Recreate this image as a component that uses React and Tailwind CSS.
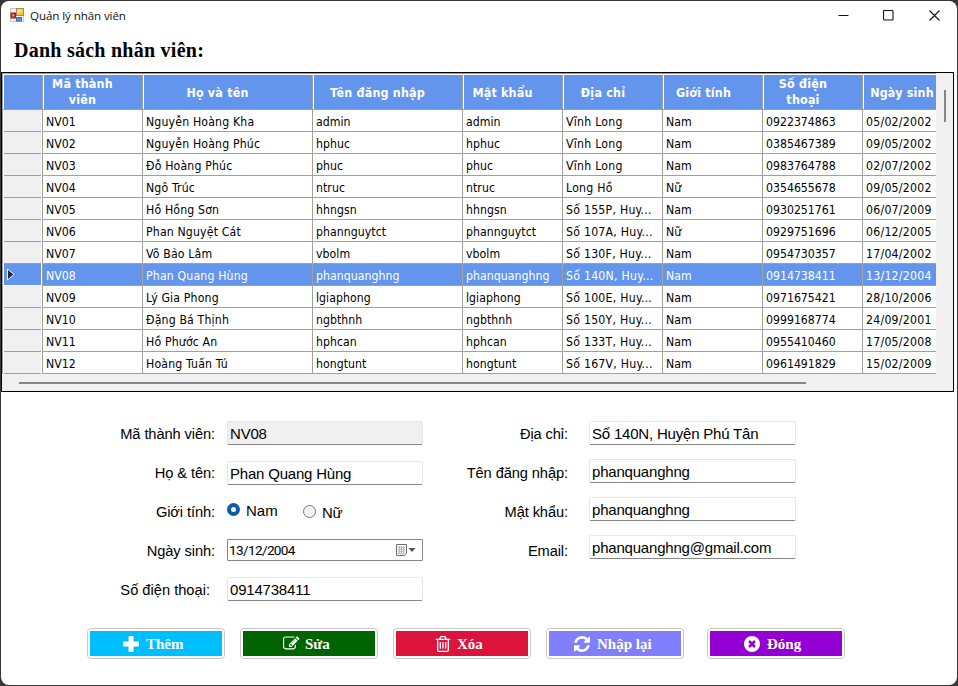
import React from "react";

const COLS = "grid grid-cols-[100px_170px_150px_100px_100px_100px_100px_74px]";

const headers = [
  ["Mã thành viên", "pr-[21px]"],
  ["Họ và tên", "pr-[21px] pt-px"],
  ["Tên đăng nhập", "pr-[21px] pt-px"],
  ["Mật khẩu", "pr-[21px] pt-px"],
  ["Địa chỉ", "pr-[20px] pt-px"],
  ["Giới tính", "pr-[19px] pt-px"],
  ["Số điện thoại", "pr-[20px]"],
  ["Ngày sinh", "pl-[3px] pt-px"],
];

const rows = [
  ["NV01", "Nguyễn Hoàng Kha", "admin", "admin", "Vĩnh Long", "Nam", "0922374863", "05/02/2002"],
  ["NV02", "Nguyễn Hoàng Phúc", "hphuc", "hphuc", "Vĩnh Long", "Nam", "0385467389", "09/05/2002"],
  ["NV03", "Đỗ Hoàng Phúc", "phuc", "phuc", "Vĩnh Long", "Nam", "0983764788", "02/07/2002"],
  ["NV04", "Ngô Trúc", "ntruc", "ntruc", "Long Hồ", "Nữ", "0354655678", "09/05/2002"],
  ["NV05", "Hồ Hồng Sơn", "hhngsn", "hhngsn", "Số 155P, Huy...", "Nam", "0930251761", "06/07/2009"],
  ["NV06", "Phan Nguyệt Cát", "phannguytct", "phannguytct", "Số 107A, Huy...", "Nữ", "0929751696", "06/12/2005"],
  ["NV07", "Võ Bảo Lâm", "vbolm", "vbolm", "Số 130F, Huy...", "Nam", "0954730357", "17/04/2002"],
  ["NV08", "Phan Quang Hùng", "phanquanghng", "phanquanghng", "Số 140N, Huy...", "Nam", "0914738411", "13/12/2004"],
  ["NV09", "Lý Gia Phong", "lgiaphong", "lgiaphong", "Số 100E, Huy...", "Nam", "0971675421", "28/10/2006"],
  ["NV10", "Đặng Bá Thịnh", "ngbthnh", "ngbthnh", "Số 150Y, Huy...", "Nam", "0999168774", "24/09/2001"],
  ["NV11", "Hồ Phước An", "hphcan", "hphcan", "Số 133T, Huy...", "Nam", "0955410460", "17/05/2008"],
  ["NV12", "Hoàng Tuấn Tú", "hongtunt", "hongtunt", "Số 167V, Huy...", "Nam", "0961491829", "15/02/2009"],
];

// Horizontal tuning per grid column so the text fills the cell as Tahoma does.
const cellTracking = ["tracking-normal", "tracking-[0.16px]", "tracking-[0.05px]", "tracking-[0.05px]", "tracking-[0.25px]", "tracking-normal", "tracking-normal", "tracking-[0.25px]"];

function AppIcon() {
  return (
    <svg width="15" height="15" viewBox="0 0 15 15">
      <rect x="0.5" y="0.5" width="13" height="13" fill="#f4f4f4" stroke="#c9c9c9" />
      <rect x="6.5" y="0.5" width="7" height="7" fill="#f3c63f" stroke="#a8894a" />
      <rect x="7.5" y="1.5" width="4" height="3" fill="#fbe08a" />
      <rect x="1" y="5" width="4.5" height="5" fill="#b83a2e" stroke="#8a2b22" />
      <rect x="2.2" y="6.3" width="2" height="2" fill="#e58a78" />
      <rect x="6.5" y="9.5" width="5" height="3.5" fill="#5f93dc" stroke="#3b68b0" />
    </svg>
  );
}

function TitleBar() {
  return (
    <div className="flex h-[29px] items-center pl-[9px] pr-[17px]">
      <AppIcon />
      <span className="ml-[5px] font-['Open_Sans','Noto_Sans',sans-serif] text-[11.6px] tracking-[-0.1px] text-[#111]">
        Quản lý nhân viên
      </span>
      <div className="ml-auto flex items-center text-[#111]">
        <svg width="11" height="11" viewBox="0 0 11 11" className="mr-[34px]">
          <path d="M0.5 5.5H10.5" stroke="currentColor" />
        </svg>
        <svg width="11" height="11" viewBox="0 0 11 11" className="mr-[35px]">
          <rect x="0.5" y="0.5" width="9.5" height="9.5" rx="1" fill="none" stroke="currentColor" strokeWidth="1.1" />
        </svg>
        <svg width="11" height="11" viewBox="0 0 11 11">
          <path d="M0.5 0.5L10.5 10.5M10.5 0.5L0.5 10.5" stroke="currentColor" strokeWidth="1.1" />
        </svg>
      </div>
    </div>
  );
}

function Grid() {
  return (
    <div className="flex h-[320px] w-[953px] flex-col border border-black bg-[#f0f0f0] font-['DejaVu_Sans_Condensed','DejaVu_Sans','Noto_Sans',sans-serif] text-[12.2px]">
      <div className="flex h-[301px]">
        <div className="w-[934px] shrink-0 overflow-hidden border-l border-[#a0a0a0] bg-white">
          <div className="flex h-[37px] border-t border-b border-[#a0a0a0] bg-[#6495ed]">
            <div className="flex h-[35px] border-t border-l border-white">
              <div className="w-[39px] shrink-0 border-r border-[#a0a0a0]" />
              <div className={COLS + " text-[12.4px] font-bold leading-[16px] tracking-[0.2px] text-white"}>
                {headers.map(([label, pad]) => (
                  <div key={label} className={"flex items-center justify-center border-l border-r border-l-white border-r-[#a0a0a0] text-center last:border-r-0 " + pad}>
                    <span className={label.length === 13 && label !== "Tên đăng nhập" ? "w-[68px]" : "whitespace-nowrap"}>{label}</span>
                  </div>
                ))}
              </div>
            </div>
          </div>
          {rows.map((row) => {
            const selected = row[0] === "NV08";
            return (
              <div key={row[0]} className={"flex h-[22px] " + (selected ? "text-white" : "text-black")}>
                <div className="flex w-[40px] shrink-0 border-r border-[#a0a0a0] pl-px">
                  <div className={"flex h-[22px] w-[37px] items-center border-b " + (selected ? "border-white bg-[#6495ed]" : "border-[#a0a0a0] bg-[#f0f0f0]")}>
                    {selected && (
                      <svg width="9" height="13" viewBox="0 0 9 13" className="ml-[2px]">
                        <path d="M1.5 1V12L8 6.5Z" fill="#2b2b3b" stroke="#eef3ff" strokeWidth="1" />
                      </svg>
                    )}
                  </div>
                </div>
                <div className={COLS + (selected ? " bg-[#6495ed]" : "")}>
                  {row.map((cell, i) => (
                    <div key={i} className={"overflow-hidden border-r border-b border-[#a0a0a0] pl-[3px] leading-[24px] whitespace-nowrap last:border-r-0 " + cellTracking[i]}>
                      {cell}
                    </div>
                  ))}
                </div>
              </div>
            );
          })}
        </div>
        <div className="flex grow justify-center pt-[17px]">
          <div className="h-[32px] w-[2px] bg-[#868686]" />
        </div>
      </div>
      <div className="mt-[8px] ml-[17px] h-[2px] w-[787px] bg-[#868686]" />
    </div>
  );
}

function Label({ children, className = "tracking-[-0.1px]" }) {
  return <div className={"flex h-[39px] items-center justify-end text-[14.67px] whitespace-nowrap " + className}>{children}</div>;
}

function Field({ value, className = "" }) {
  return (
    <div className={"flex h-[24px] items-center rounded-[2px] border border-[#e6e6e6] border-b-[#868686] pl-[2px] pt-[3px] text-[15px] tracking-[-0.2px] whitespace-nowrap " + className}>
      {value}
    </div>
  );
}

function DateField() {
  return (
    <div className="mt-[18px] flex h-[22px] items-center rounded-[1px] border border-[#868686] pl-[1px] text-[14px]">
      <span className="font-['Roboto','Liberation_Sans',sans-serif] text-[13.6px] tracking-[-0.65px]">13/12/2004</span>
      <svg width="24" height="14" viewBox="0 0 24 14" className="mr-[3px] ml-auto">
        <path d="M1.5 1.5H11.5V10L9.5 12.5H1.5Z" fill="#f5f5f5" stroke="#6d6d6d" />
        <path d="M3 4.5H10M3 6.5H10M3 8.5H10M3 10.5H9M4.5 3V11M6.5 3V11M8.5 3V11" stroke="#b5b5b5" strokeWidth="0.8" />
        <path d="M13.5 5H20.5L17 9Z" fill="#44546f" />
      </svg>
    </div>
  );
}

function FormArea() {
  return (
    <div className="flex h-[236px] pt-[22px] font-['Liberation_Sans',Arial,sans-serif] text-black">
      <div className="ml-[100px] w-[114px]">
        <Label>Mã thành viên:</Label>
        <Label>Họ &amp; tên:</Label>
        <Label>Giới tính:</Label>
        <Label>Ngày sinh:</Label>
        <Label className="pr-[5px] tracking-normal">Số điện thoại:</Label>
      </div>
      <div className="ml-[12px] w-[196px] pt-[7px]">
        <Field value="NV08" className="bg-[#f0f0f0]" />
        <Field value="Phan Quang Hùng" className="mt-[16px]" />
        <div className="mt-[16px] flex h-[20px] text-[15px]">
          <div className="mt-[2px] h-[13px] w-[13px] rounded-full border-4 border-[#0a5ca8] bg-white" />
          <span className="ml-[6px] w-[57px] leading-[20px]">Nam</span>
          <div className="mt-[4px] h-[13px] w-[13px] rounded-full border border-[#777] bg-[#f3f3f3]" />
          <span className="ml-[6px] pt-[2px] leading-[20px] tracking-[-0.4px]">Nữ</span>
        </div>
        <DateField />
        <Field value="0914738411" className="mt-[16px]" />
      </div>
      <div className="ml-[40px] w-[105px]">
        <Label>Địa chỉ:</Label>
        <Label>Tên đăng nhập:</Label>
        <Label>Mật khẩu:</Label>
        <Label>Email:</Label>
      </div>
      <div className="ml-[21px] flex w-[207px] flex-col gap-[14px] pt-[7px]">
        <Field value="Số 140N, Huyện Phú Tân" />
        <Field value="phanquanghng" />
        <Field value="phanquanghng" />
        <Field value="phanquanghng@gmail.com" />
      </div>
    </div>
  );
}

function PlusIcon() {
  return (
    <svg width="16" height="16" viewBox="0 0 16 16" fill="currentColor">
      <path d="M5.5 1Q5.5 0 6.5 0H9.5Q10.5 0 10.5 1V5.5H15Q16 5.5 16 6.5V9.5Q16 10.5 15 10.5H10.5V15Q10.5 16 9.5 16H6.5Q5.5 16 5.5 15V10.5H1Q0 10.5 0 9.5V6.5Q0 5.5 1 5.5H5.5Z" />
    </svg>
  );
}

function EditIcon() {
  return (
    <svg width="17" height="17" viewBox="0 0 1850 1792" fill="currentColor">
      <path d="M888 1184l116-116-152-152-116 116v56h96v96h56zm440-720q-16-16-33 1l-350 350q-17 17-1 33t33-1l350-350q17-17 1-33zm80 594v190q0 119-84.5 203.5t-203.5 84.5h-832q-119 0-203.5-84.5t-84.5-203.5v-832q0-119 84.5-203.5t203.5-84.5h832q63 0 117 25 15 7 18 23 3 17-9 29l-49 49q-14 14-32 8-23-6-45-6h-832q-66 0-113 47t-47 113v832q0 66 47 113t113 47h832q66 0 113-47t47-113v-126q0-13 9-22l64-64q15-15 35-7t20 29zm-96-738l288 288-672 672h-288v-288zm444 132l-92 92-288-288 92-92q28-28 68-28t68 28l152 152q28 28 28 68t-28 68z" />
    </svg>
  );
}

function TrashIcon() {
  return (
    <svg width="16" height="16" viewBox="128 128 1536 1536" fill="currentColor">
      <path d="M704 736v576q0 14-9 23t-23 9h-64q-14 0-23-9t-9-23v-576q0-14 9-23t23-9h64q14 0 23 9t9 23zm256 0v576q0 14-9 23t-23 9h-64q-14 0-23-9t-9-23v-576q0-14 9-23t23-9h64q14 0 23 9t9 23zm256 0v576q0 14-9 23t-23 9h-64q-14 0-23-9t-9-23v-576q0-14 9-23t23-9h64q14 0 23 9t9 23zm128 724v-948h-896v948q0 22 7 40.5t14.5 27 10.5 8.5h832q3 0 10.5-8.5t14.5-27 7-40.5zm-672-1076h448l-48-117q-7-9-17-11h-317q-10 2-17 11zm928 32v64q0 14-9 23t-23 9h-96v948q0 83-47 143.5t-113 60.5h-832q-66 0-113-58.5t-47-141.5v-952h-96q-14 0-23-9t-9-23v-64q0-14 9-23t23-9h309l70-167q15-37 54-63t79-26h320q40 0 79 26t54 63l70 167h309q14 0 23 9t9 23z" />
    </svg>
  );
}

function RefreshIcon() {
  return (
    <svg width="16" height="16" viewBox="0 0 1536 1536" fill="currentColor">
      <path d="M1511 928q0 5-1 7-64 268-268 434.5t-478 166.5q-146 0-282.5-55t-243.5-157l-129 129q-19 19-45 19t-45-19-19-45v-448q0-26 19-45t45-19h448q26 0 45 19t19 45-19 45l-137 137q71 66 161 102t187 36q134 0 250-65t186-179q11-17 53-117 8-23 30-23h192q13 0 22.5 9.5t9.5 22.5zm25-800v448q0 26-19 45t-45 19h-448q-26 0-45-19t-19-45 19-45l138-138q-148-137-349-137-134 0-250 65t-186 179q-11 17-53 117-8 23-30 23h-199q-13 0-22.5-9.5t-9.5-22.5v-7q65-268 270-434.5t480-166.5q146 0 284 55.5t245 156.5l130-129q19-19 45-19t45 19 19 45z" />
    </svg>
  );
}

function CloseIcon() {
  return (
    <svg width="16" height="16" viewBox="0 0 16 16">
      <circle cx="8" cy="8" r="8" fill="currentColor" />
      <path d="M5 5L11 11M11 5L5 11" stroke="#9400d3" strokeWidth="2.6" />
    </svg>
  );
}

const buttons = [
  { label: "Thêm", Icon: PlusIcon, box: "", fill: "bg-[#00bfff] pl-[33px] gap-[7px]" },
  { label: "Sửa", Icon: EditIcon, box: "ml-[15px]", fill: "bg-[#006400] pl-[40px] gap-[5px]" },
  { label: "Xóa", Icon: TrashIcon, box: "ml-[15px]", fill: "bg-[#dc143c] pl-[39px] gap-[6px]" },
  { label: "Nhập lại", Icon: RefreshIcon, box: "ml-[15px]", fill: "bg-[#8080ff] pl-[25px] gap-[7px]" },
  { label: "Đóng", Icon: CloseIcon, box: "ml-[23px]", fill: "bg-[#9400d3] pl-[34px] gap-[7px]" },
];

export default function App() {
  return (
    <div className="h-[686px] w-[958px] overflow-hidden bg-[#3a3639] pt-px pl-px">
      <div className="flex h-[684px] w-[956px] flex-col rounded-[8px] bg-white">
        <TitleBar />
        <h1 className="h-[42px] pt-[8px] pl-[13px] font-['Liberation_Serif',serif] text-[20px] leading-[24px] font-bold tracking-[0.25px] text-black">
          Danh sách nhân viên:
        </h1>
        <Grid />
        <FormArea />
        <div className="ml-[86px] flex font-['Liberation_Serif',serif] text-[15px] font-bold text-white">
          {buttons.map(({ label, Icon, box, fill }) => (
            <div key={label} className={"h-[31px] w-[138px] rounded-[4px] border border-[#c8c8c8] bg-white p-[2px] " + box}>
              <button className={"flex h-[25px] w-full items-center " + fill}>
                <Icon />
                <span className="pt-[2px] whitespace-nowrap">{label}</span>
              </button>
            </div>
          ))}
        </div>
      </div>
    </div>
  );
}
